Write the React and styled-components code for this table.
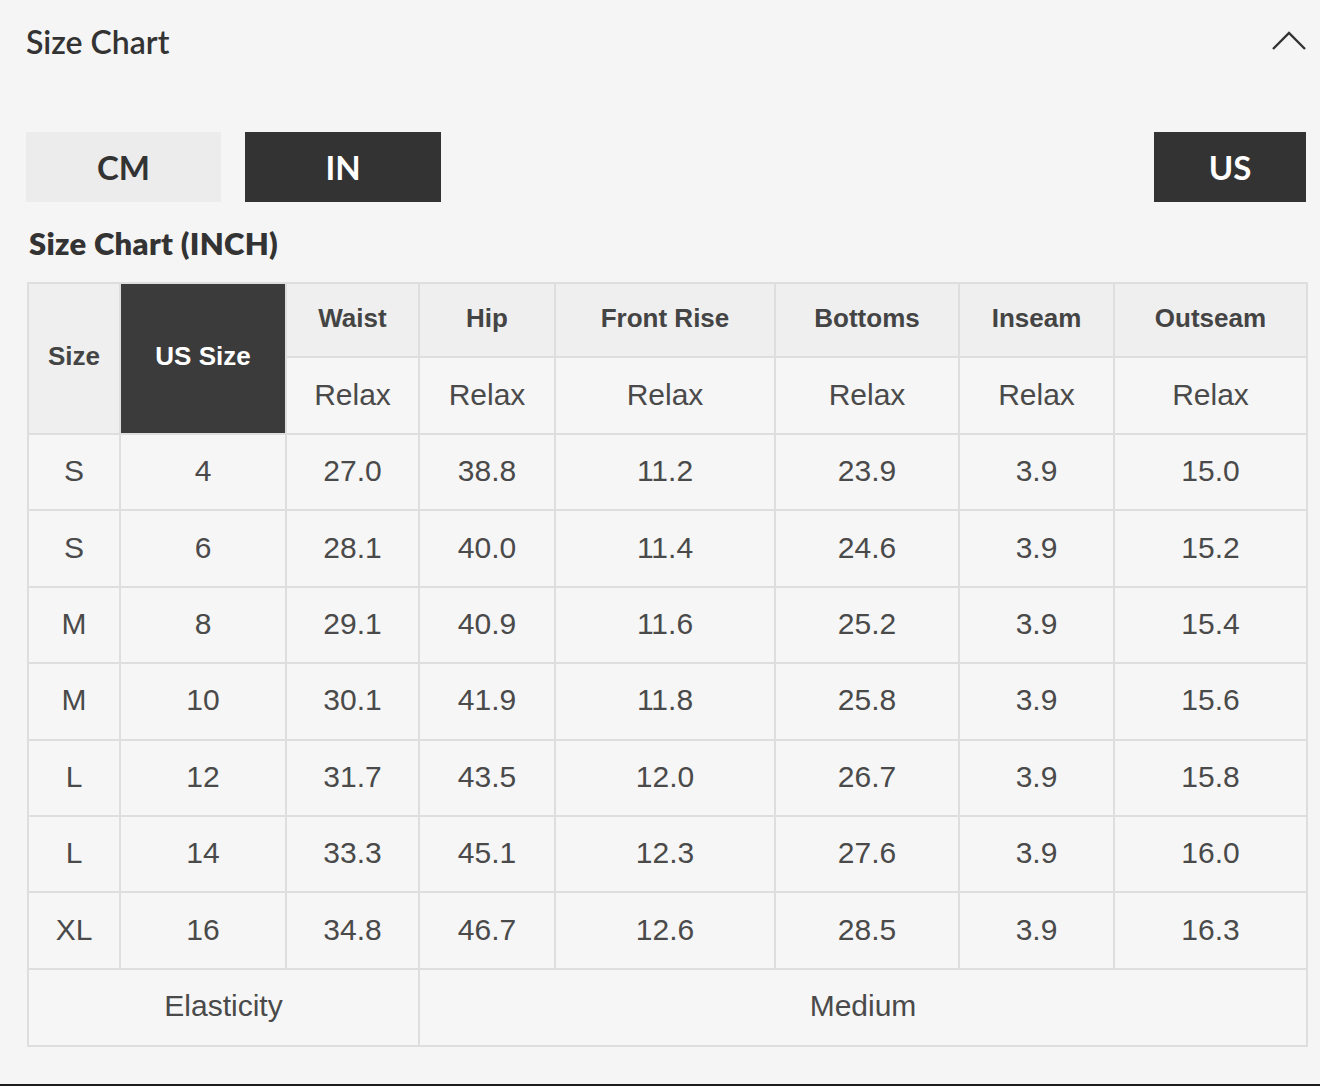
import React from "react";
import styled, { createGlobalStyle } from "styled-components";

const GlobalStyle = createGlobalStyle`
  html, body { margin: 0; padding: 0; background: #f5f5f5; }
  * { box-sizing: border-box; }
`;

const columns = ["Waist", "Hip", "Front Rise", "Bottoms", "Inseam", "Outseam"];
const widths = [92, 166, 133, 136, 220, 184, 155, 193];

const rows = [
  ["S", "4", "27.0", "38.8", "11.2", "23.9", "3.9", "15.0"],
  ["S", "6", "28.1", "40.0", "11.4", "24.6", "3.9", "15.2"],
  ["M", "8", "29.1", "40.9", "11.6", "25.2", "3.9", "15.4"],
  ["M", "10", "30.1", "41.9", "11.8", "25.8", "3.9", "15.6"],
  ["L", "12", "31.7", "43.5", "12.0", "26.7", "3.9", "15.8"],
  ["L", "14", "33.3", "45.1", "12.3", "27.6", "3.9", "16.0"],
  ["XL", "16", "34.8", "46.7", "12.6", "28.5", "3.9", "16.3"],
];

const Page = styled.div`
  height: 1086px;
  padding: 19px 14px 0 26px;
  border-bottom: 2px solid #1c1c1c;
  background: #f5f5f5;
  font-family: "Liberation Sans", Arial, sans-serif;
  color: #444;
`;

const Header = styled.div`
  display: flex;
  align-items: center;
  justify-content: space-between;
  height: 44px;
`;

const Title = styled.h2`
  margin: 0;
  font-family: "Lato", "Noto Sans", sans-serif;
  font-size: 32px;
  font-weight: 600;
  color: #333;
`;

const Chevron = styled.svg`
  width: 36px;
  height: 22px;
  margin-right: -1px;
`;

const Tabs = styled.div`
  display: flex;
  gap: 24px;
  margin-top: 69px;
  height: 70px;
`;

const Tab = styled.div`
  width: ${(p) => p.$w}px;
  display: flex;
  align-items: center;
  justify-content: center;
  background: ${(p) => (p.$active ? "#333333" : "#ececec")};
  color: ${(p) => (p.$active ? "#ffffff" : "#333333")};
  font-family: "Lato", "Noto Sans", sans-serif;
  font-size: 33px;
  font-weight: 700;
  margin-left: ${(p) => (p.$push ? "auto" : "0")};
`;

const SubTitle = styled.h3`
  margin: 21px 0 0 3px;
  height: 59px;
  font-family: "Lato", "Noto Sans", sans-serif;
  font-size: 31px;
  font-weight: 800;
  color: #333;
  line-height: 40px;
  letter-spacing: 0.3px;
`;

const Table = styled.table`
  border-collapse: collapse;
  table-layout: fixed;
  width: 1280px;
  margin-left: 1px;
`;

const HeadCell = styled.th`
  border: 2px solid #dedede;
  background: ${(p) => (p.$dark ? "#3b3b3b" : "#efefef")};
  color: ${(p) => (p.$dark ? "#ffffff" : "#444")};
  font-size: 26px;
  font-weight: 700;
  text-align: center;
  padding: 0 0 4px;
`;

const Cell = styled.td`
  border: 2px solid #dedede;
  background: #f6f6f6;
  font-size: 30px;
  font-weight: 400;
  text-align: center;
  color: #4a4a4a;
  padding: 0 0 2px;
`;

const Row = styled.tr`
  height: ${(p) => p.$h}px;
`;

export default function App() {
  return (
    <Page>
      <GlobalStyle />
      <Header>
        <Title>Size Chart</Title>
        <Chevron viewBox="0 0 36 22">
          <path d="M2 19 L18 3 L34 19" fill="none" stroke="#333" strokeWidth="2.4" />
        </Chevron>
      </Header>
      <Tabs>
        <Tab $w={195}>CM</Tab>
        <Tab $w={196} $active>IN</Tab>
        <Tab $w={152} $active $push>US</Tab>
      </Tabs>
      <SubTitle>Size Chart (INCH)</SubTitle>
      <Table>
        <colgroup>
          {widths.map((w, i) => (
            <col key={i} style={{ width: w }} />
          ))}
        </colgroup>
        <thead>
          <Row $h={74}>
            <HeadCell rowSpan={2}>Size</HeadCell>
            <HeadCell rowSpan={2} $dark>US Size</HeadCell>
            {columns.map((c) => (
              <HeadCell key={c}>{c}</HeadCell>
            ))}
          </Row>
          <Row $h={77}>
            {columns.map((c) => (
              <Cell key={c}>Relax</Cell>
            ))}
          </Row>
        </thead>
        <tbody>
          {rows.map((r, i) => (
            <Row key={i} $h={76.4}>
              {r.map((v, j) => (
                <Cell key={j}>{v}</Cell>
              ))}
            </Row>
          ))}
          <Row $h={77}>
            <Cell colSpan={3}>Elasticity</Cell>
            <Cell colSpan={5}>Medium</Cell>
          </Row>
        </tbody>
      </Table>
    </Page>
  );
}
